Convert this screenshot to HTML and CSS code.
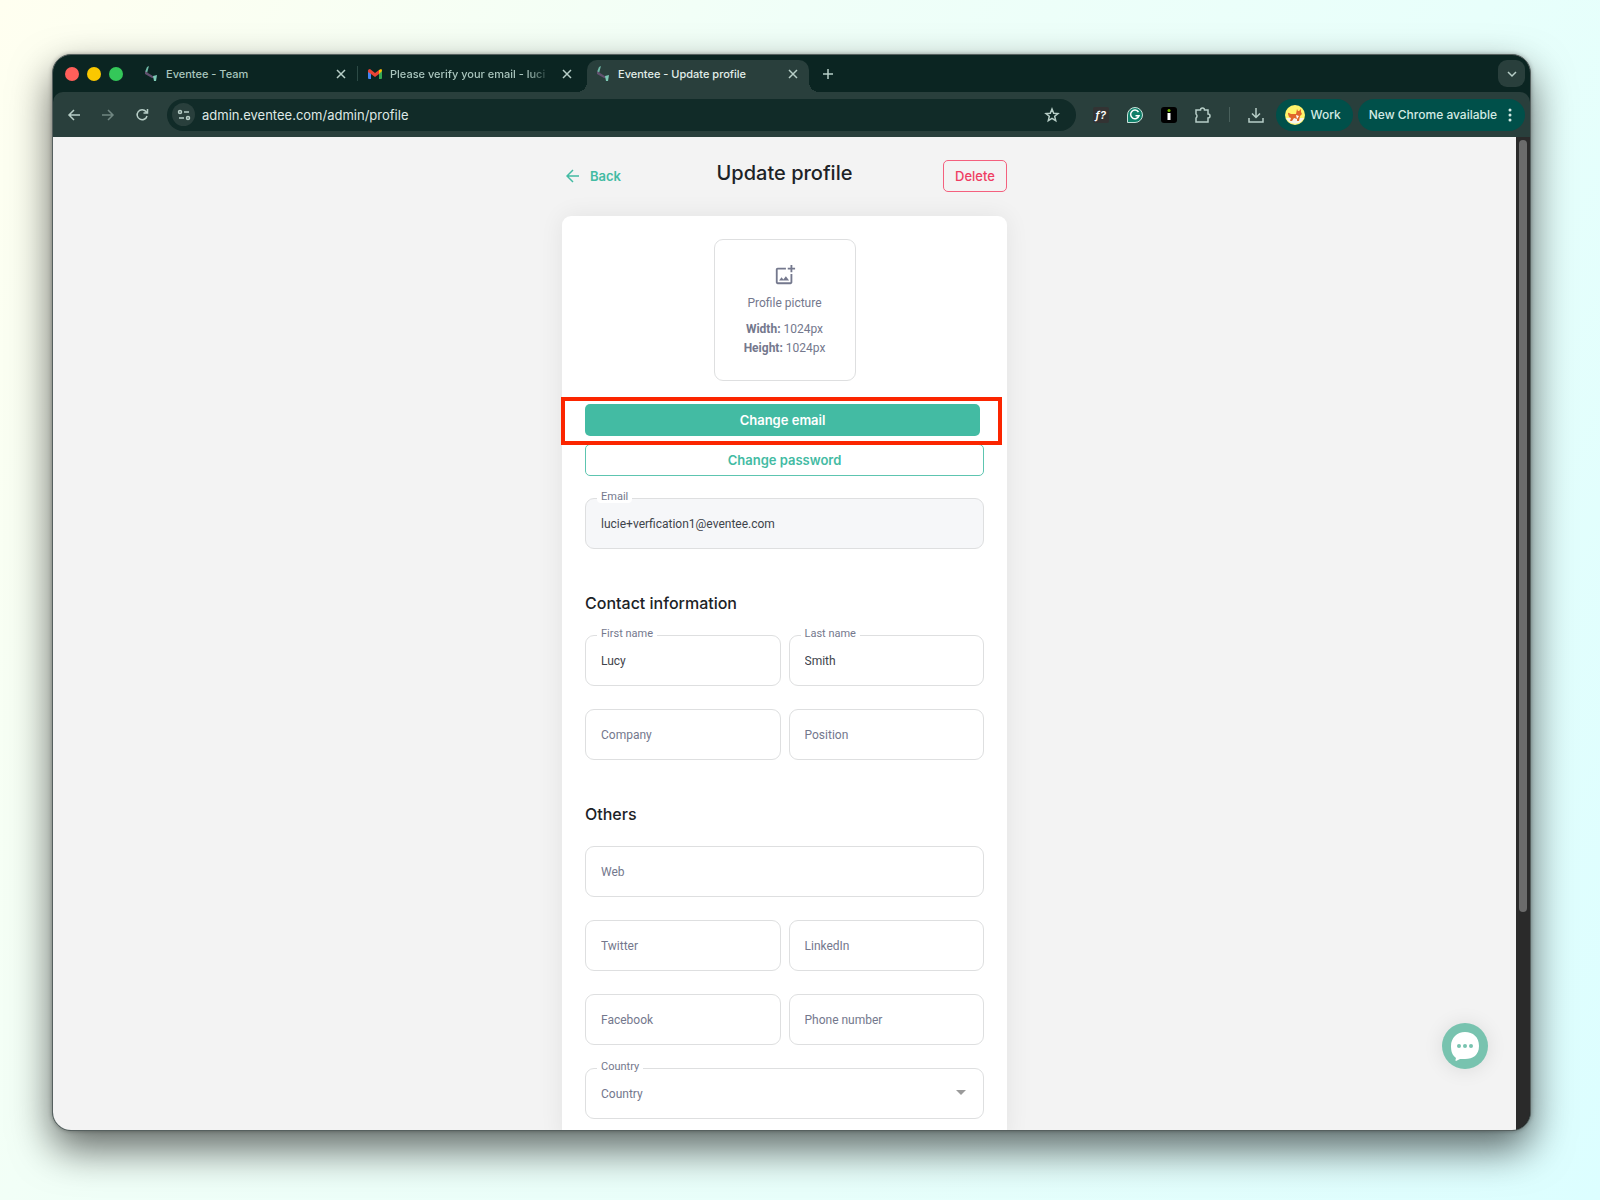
FILE: index.html
```html
<!DOCTYPE html>
<html lang="en">
<head>
  <meta charset="UTF-8" />
  <meta name="viewport" content="width=device-width, initial-scale=1.0" />
  <title>Eventee - Update profile</title>
  <link rel="stylesheet" href="styles.css">
</head>
<body>
  <div class="window">

    <!-- Tabs -->
    <div class="tabbar">
      <div class="lights">
        <span class="light red"></span>
        <span class="light yellow"></span>
        <span class="light green"></span>
      </div>
      <div class="tab">
        <svg class="favicon" viewBox="0 0 14 16"><path d="M3 1L5 0 3 7 1 6z" fill="#6fb9a6"/><path d="M1 5L4 7 12 12 8 12 1 8z" fill="#61506e"/><path d="M9 10L13 9 12 15 10 15z" fill="#7cc9b5"/></svg>
        <span class="tab-title">Eventee - Team</span>
        <button class="icon-button" aria-label="Close tab"><svg width="12" height="12" viewBox="0 0 12 12"><path d="M2 2l8 8M10 2l-8 8"/></svg></button>
      </div>
      <div class="tab mail">
        <svg class="favicon" viewBox="0 0 14 14"><path d="M0 3v8q0 1 1 1h2V6z" fill="#4285f4"/><path d="M11 6v6h2q1 0 1-1V3z" fill="#34a853"/><path d="M11 3l2-1q1 0 1 2l-3 3z" fill="#fbbc04"/><path d="M0 4q0-2 2-2l5 4 4-3v4L7 10 3 7 0 5z" fill="#ea4335"/></svg>
        <span class="tab-title fade">Please verify your email - luci</span>
        <button class="icon-button" aria-label="Close tab"><svg width="12" height="12" viewBox="0 0 12 12"><path d="M2 2l8 8M10 2l-8 8"/></svg></button>
      </div>
      <div class="tab active">
        <svg class="favicon" viewBox="0 0 14 16"><path d="M3 1L5 0 3 7 1 6z" fill="#6fb9a6"/><path d="M1 5L4 7 12 12 8 12 1 8z" fill="#61506e"/><path d="M9 10L13 9 12 15 10 15z" fill="#7cc9b5"/></svg>
        <span class="tab-title">Eventee - Update profile</span>
        <button class="icon-button" aria-label="Close tab"><svg width="12" height="12" viewBox="0 0 12 12"><path d="M2 2l8 8M10 2l-8 8"/></svg></button>
      </div>
      <button class="icon-button new-tab" aria-label="New tab"><svg width="12" height="12" viewBox="0 0 12 12"><path d="M6 1v10M1 6h10"/></svg></button>
      <button class="icon-button tab-search" aria-label="Search tabs"><svg width="12" height="12" viewBox="0 0 12 12"><path d="M2 4l4 4 4-4"/></svg></button>
    </div>

    <!-- Toolbar -->
    <div class="toolbar">
      <div class="nav">
        <button class="icon-button" aria-label="Back"><svg width="14" height="14" viewBox="0 0 14 14"><path d="M13 7H2M7 2L2 7l5 5"/></svg></button>
        <button class="icon-button dim" aria-label="Forward"><svg width="14" height="14" viewBox="0 0 14 14"><path d="M1 7h11M7 2l5 5-5 5"/></svg></button>
        <button class="icon-button" aria-label="Reload"><svg width="14" height="14" viewBox="0 0 14 14"><path d="M12 8a5 5 0 1 1-1-4.500L12.500 5M12.500 1v4h-4"/></svg></button>
      </div>
      <div class="address">
        <button class="icon-button site-info" aria-label="Site information"><svg width="14" height="14" viewBox="0 0 14 14"><circle cx="3" cy="4" r="1.500"/><path d="M7 4h5M2 10h5"/><circle cx="11" cy="10" r="1.500"/></svg></button>
        <input class="url" type="text" aria-label="Address" value="admin.eventee.com/admin/profile" />
        <button class="icon-button" aria-label="Bookmark"><svg width="16" height="16" viewBox="0 0 16 16"><path d="M8 2l1.700 4.200 4.300.3-3.300 2.800 1 4.300L8 11.300l-3.700 2.300 1-4.300L2 6.500l4.300-.3z"/></svg></button>
      </div>
      <div class="extensions">
        <button class="icon-button ext-font" aria-label="Font finder">ƒ?</button>
        <button class="icon-button" aria-label="Grammar"><svg width="16" height="16" viewBox="0 0 16 16"><path d="M8 .5a7.500 7.500 0 1 1 0 15H.5V8A7.500 7.500 0 0 1 8 .5z" fill="#11806a" stroke="#c9e0da" stroke-width="1"/><path d="M11.500 5A4.300 4.300 0 1 0 12 8.800H8.500" stroke="#fff"/></svg></button>
        <button class="icon-button ext-info" aria-label="Info"><svg width="16" height="16" viewBox="0 0 16 16"><path d="M8 6v7" stroke="#fff" stroke-width="3"/><circle cx="8" cy="3.500" r="1.500" fill="#76b900" stroke="none"/></svg></button>
        <button class="icon-button" aria-label="Extensions"><svg width="18" height="18" viewBox="0 0 18 18"><path d="M2 4h4.500a2 2 0 0 1 4 0H14v4a2 2 0 0 1 0 4v4H2v-4a2.500 2.500 0 0 0 0-4z"/></svg></button>
        <span class="divider"></span>
        <button class="icon-button" aria-label="Downloads"><svg width="16" height="16" viewBox="0 0 16 16"><path d="M8 1v9M4 6.500l4 4 4-4M1 11v4h14v-4"/></svg></button>
      </div>
      <button class="pill work">
        <svg class="avatar" viewBox="0 0 20 20"><circle cx="10" cy="10" r="10" fill="#fff36b"/><path d="M1 13h18a10 10 0 0 1-18 0z" fill="#f6f3ea"/><path d="M3 9q0-2 1-1l2 1h5l1-5 1 2h1l2-2v3l1 2-2 2-1 5h-2v-2l-3-1-2 3H5l1-3-2-1z" fill="#e0672b"/><path d="M11 10l3 1-2 3z" fill="#fff"/></svg>
        Work
      </button>
      <button class="pill update">
        New Chrome available
        <svg width="4" height="14" viewBox="0 0 4 14"><circle cx="2" cy="2" r="1.500"/><circle cx="2" cy="7" r="1.500"/><circle cx="2" cy="12" r="1.500"/></svg>
      </button>
    </div>

    <!-- Page -->
    <div class="viewport">
      <main class="page">
        <header class="page-header">
          <a class="back" href="#">
            <svg width="14" height="14" viewBox="0 0 14 14"><path d="M13 7H1M7 1L1 7l6 6"/></svg>
            Back
          </a>
          <h1>Update profile</h1>
          <button class="delete">Delete</button>
        </header>

        <form class="card">
          <button type="button" class="picture">
            <svg width="22" height="22" viewBox="0 0 24 24"><path d="M18 20H4V6h9V4H4c-1.100 0-2 .9-2 2v14c0 1.100.9 2 2 2h14c1.100 0 2-.9 2-2v-9h-2v9zm-7.790-3.170l-1.960-2.360L5.500 18h11l-3.540-4.710zM20 4V1h-2v3h-3v2h3v3h2V6h3V4z"/></svg>
            <span class="picture-title">Profile picture</span>
            <span class="picture-size"><b>Width:</b> 1024px</span>
            <span class="picture-size"><b>Height:</b> 1024px</span>
          </button>

          <div class="actions">
            <div class="highlighted">
              <button type="button" class="primary">Change email</button>
            </div>
            <button type="button" class="outline">Change password</button>
          </div>

          <div class="field">
            <label for="email">Email</label>
            <input id="email" class="locked" type="text" value="lucie+verfication1@eventee.com" readonly />
          </div>

          <h2>Contact information</h2>
          <div class="grid">
            <div class="field">
              <label for="firstName">First name</label>
              <input id="firstName" type="text" value="Lucy" />
            </div>
            <div class="field">
              <label for="lastName">Last name</label>
              <input id="lastName" type="text" value="Smith" />
            </div>
            <div class="field"><input type="text" aria-label="Company" placeholder="Company" /></div>
            <div class="field"><input type="text" aria-label="Position" placeholder="Position" /></div>
          </div>

          <h2>Others</h2>
          <div class="grid">
            <div class="field wide"><input type="text" aria-label="Web" placeholder="Web" /></div>
            <div class="field"><input type="text" aria-label="Twitter" placeholder="Twitter" /></div>
            <div class="field"><input type="text" aria-label="LinkedIn" placeholder="LinkedIn" /></div>
            <div class="field"><input type="text" aria-label="Facebook" placeholder="Facebook" /></div>
            <div class="field"><input type="text" aria-label="Phone number" placeholder="Phone number" /></div>
            <div class="field wide">
              <label for="country">Country</label>
              <select id="country"><option>Country</option></select>
              <span class="caret"></span>
            </div>
          </div>
        </form>

        <button class="chat" aria-label="Open chat">
          <svg width="30" height="30" viewBox="0 0 30 30"><path d="M15 1C23 1 29 6 29 15s-6 13-14 13c-2 0-4 0-5 0l-4 2q-1 0 0-3C2 24 1 20 1 15 1 7 7 1 15 1z" fill="#fff"/><circle cx="9" cy="15" r="2"/><circle cx="15" cy="15" r="2"/><circle cx="21" cy="15" r="2"/></svg>
        </button>
      </main>
      <div class="scrollbar"><div class="thumb"></div></div>
    </div>
  </div>
</body>
</html>
```
FILE: styles.css
```css
* {
  box-sizing: border-box;
}

body {
  margin: 0;
  height: 100vh;
  padding: 54px 69px 69px 52px;
  display: flex;
  font-family: Roboto, sans-serif;
  background: linear-gradient(120deg, #fffff0 0%, #f0fff8 35%, #e8fffb 65%, #dcfeff 100%);
}

button,
input,
select {
  font: inherit;
  margin: 0;
}

button {
  padding: 0;
  border: none;
  background: none;
  cursor: pointer;
}

svg {
  flex: none;
}

.window {
  flex: 1;
  min-width: 0;
  display: flex;
  flex-direction: column;
  border-radius: 19px;
  border: 1px solid #56605f;
  overflow: hidden;
  background: #0b2522;
  box-shadow: 0 18px 40px rgba(0, 0, 0, 0.6), 0 0 4px rgba(0, 0, 0, 0.3);
}

/* Tabs */
.tabbar {
  display: flex;
  align-items: center;
  height: 37px;
  padding: 0 5px 0 12px;
  color: #a9c5bd;
  font-family: Inter, sans-serif;
  font-size: 11px;
  font-weight: 500;
}

.lights {
  display: flex;
  gap: 8px;
  margin-right: 12px;
}

.light {
  width: 14px;
  height: 14px;
  border-radius: 50%;
}

.red { background: #ff5f5a; }
.yellow { background: #fac800; }
.green { background: #34c759; }

.tab {
  display: flex;
  align-items: center;
  gap: 8px;
  flex: 0 1 222px;
  min-width: 0;
  height: 32px;
  margin-top: 5px;
  padding: 0 8px 5px 9px;
}

.mail {
  flex-basis: 230px;
  position: relative;
  padding: 0 12px 5px 11px;
}

.mail::before {
  content: "";
  position: absolute;
  left: 0;
  top: 6px;
  width: 1px;
  height: 15px;
  background: #2c4a45;
}

.active {
  position: relative;
  background: #293f3c;
  border-radius: 10px 10px 0 0;
  color: #e2eeea;
}

/* Flared feet of the open tab */
.active::before,
.active::after {
  content: "";
  position: absolute;
  bottom: 0;
  width: 10px;
  height: 10px;
}

.active::before {
  left: -10px;
  background: radial-gradient(circle at 0 0, transparent 10px, #293f3c 10px);
}

.active::after {
  right: -10px;
  background: radial-gradient(circle at 100% 0, transparent 10px, #293f3c 10px);
}

.favicon {
  width: 14px;
  height: 16px;
}

.tab-title {
  flex: 1;
  min-width: 0;
  overflow: hidden;
  white-space: nowrap;
}

.fade {
  -webkit-mask-image: linear-gradient(to right, #000 85%, transparent);
  mask-image: linear-gradient(to right, #000 85%, transparent);
}

.icon-button {
  display: flex;
  align-items: center;
  justify-content: center;
  flex: none;
  width: 16px;
  height: 16px;
  color: #b7cec7;
}

.icon-button svg {
  fill: none;
  stroke: currentColor;
  stroke-width: 1.5;
}

.new-tab {
  margin-left: 11px;
}

.tab-search {
  width: 27px;
  height: 27px;
  margin-left: auto;
  border-radius: 9px;
  background: #293f3c;
}

/* Toolbar */
.toolbar {
  display: flex;
  align-items: center;
  height: 45px;
  padding: 0 5px 0 13px;
  background: #293f3c;
  border-radius: 10px 10px 0 0;
  font-family: Inter, sans-serif;
}

.nav {
  display: flex;
  gap: 18px;
  margin-right: 17px;
}

.dim {
  opacity: 0.5;
}

.address {
  flex: 1;
  min-width: 0;
  display: flex;
  align-items: center;
  height: 32px;
  padding: 0 16px 0 5px;
  border-radius: 16px;
  background: #112b28;
}

.site-info {
  width: 23px;
  height: 23px;
  border-radius: 50%;
  background: #293f3c;
}

.url {
  flex: 1;
  min-width: 0;
  padding: 0 7px;
  border: none;
  outline: none;
  background: none;
  color: #dfe8e5;
  font-size: 13px;
}

.extensions {
  display: flex;
  align-items: center;
  gap: 18px;
  margin: 0 12px 0 17px;
}

.ext-font {
  border-radius: 2px;
  background: #333;
  color: #fff;
  font-size: 11px;
  font-style: italic;
  font-weight: 600;
}

.ext-info {
  border-radius: 3px;
  background: #000;
}

.divider {
  width: 1px;
  height: 15px;
  background: #49605c;
}

.pill {
  display: flex;
  align-items: center;
  flex: none;
  height: 32px;
  border-radius: 16px;
  background: #00504a;
  color: #d3ebe4;
  font-size: 12px;
  font-weight: 500;
}

.work {
  gap: 6px;
  padding: 0 12px 0 9px;
  margin-right: 5px;
}

.avatar {
  width: 20px;
  height: 20px;
}

.update {
  gap: 11px;
  padding: 0 13px 0 11px;
}

.update svg {
  fill: currentColor;
}

/* Page */
.viewport {
  flex: 1;
  min-height: 0;
  display: flex;
}

.page {
  position: relative;
  flex: 1;
  min-width: 0;
  overflow: hidden;
  padding: 23px 20px 0;
  background: #f3f3f3;
}

.page-header {
  display: grid;
  grid-template-columns: 1fr auto 1fr;
  align-items: center;
  max-width: 445px;
  height: 32px;
  margin: 0 auto 24px;
  font-family: Inter, sans-serif;
}

.back {
  display: flex;
  align-items: center;
  gap: 10px;
  padding-left: 4px;
  color: #43bba3;
  font-size: 13px;
  font-weight: 600;
  text-decoration: none;
}

.back svg {
  fill: none;
  stroke: currentColor;
  stroke-width: 1.5;
}

h1 {
  margin: 0 0 6px;
  color: #1c2226;
  font-size: 20px;
  line-height: 26px;
  font-weight: 500;
}

.delete {
  justify-self: end;
  width: 64px;
  height: 32px;
  border: 1px solid #f4607e;
  border-radius: 5px;
  color: #ef3d62;
  font-size: 13px;
  font-weight: 500;
}

.card {
  display: flex;
  flex-direction: column;
  max-width: 445px;
  margin: 0 auto;
  padding: 23px;
  border-radius: 9px;
  background: #fff;
  box-shadow: 0 0 24px rgba(0, 0, 0, 0.07);
}

.picture {
  display: flex;
  flex-direction: column;
  align-items: center;
  align-self: center;
  width: 142px;
  height: 142px;
  padding-top: 24px;
  border: 1px solid #dedfe0;
  border-radius: 9px;
  color: #74788d;
  font-size: 12px;
  line-height: 19px;
}

.picture svg {
  fill: currentColor;
}

.picture-title {
  margin: 8px 0 7px;
}

.actions {
  display: flex;
  flex-direction: column;
  gap: 8px;
  margin: 23px 0 22px;
  font-family: Inter, sans-serif;
  font-size: 13px;
  font-weight: 600;
}

.highlighted {
  position: relative;
  display: flex;
  padding-right: 4px;
}

.highlighted::after {
  content: "";
  position: absolute;
  inset: -7px -18px -9px -24px;
  border: 4px solid #fb2500;
  pointer-events: none;
}

.primary {
  flex: 1;
  height: 32px;
  border-radius: 5px;
  background: #43bba3;
  color: #fff;
}

.outline {
  height: 32px;
  border: 1px solid #5dc5b0;
  border-radius: 5px;
  color: #43bba3;
}

.field {
  position: relative;
}

.field label {
  position: absolute;
  left: 12px;
  top: -8px;
  padding: 0 4px;
  border-radius: 4px;
  background: #fff;
  color: #74788d;
  font-size: 11px;
  line-height: 13px;
}

.field input,
.field select {
  display: block;
  width: 100%;
  height: 51px;
  padding: 0 15px;
  border: 1px solid #dedfe0;
  border-radius: 9px;
  outline: none;
  background: #fff;
  color: #3e444b;
  font-size: 12px;
}

.field input::placeholder {
  color: #74788d;
  opacity: 1;
}

.field .locked {
  background: #f6f7f9;
}

.field select {
  appearance: none;
  color: #74788d;
}

.caret {
  position: absolute;
  right: 18px;
  top: 22px;
  border: 5px solid transparent;
  border-top-color: #9b9b9b;
  pointer-events: none;
}

h2 {
  margin: 42px 0 20px;
  color: #1c2226;
  font-family: Inter, sans-serif;
  font-size: 16px;
  line-height: 24px;
  font-weight: 500;
}

.grid {
  display: grid;
  grid-template-columns: 1fr 1fr;
  gap: 23px 8px;
}

.wide {
  grid-column: 1 / -1;
}

.chat {
  position: absolute;
  right: 28px;
  bottom: 61px;
  display: flex;
  align-items: center;
  justify-content: center;
  width: 46px;
  height: 46px;
  border-radius: 50%;
  background: #78c3af;
  box-shadow: 0 1px 20px rgba(0, 0, 0, 0.1);
}

.chat svg {
  fill: #78c3af;
}

.scrollbar {
  width: 14px;
  padding: 3px 3px 0 3px;
  background: #2a2a2a;
}

.thumb {
  height: 78%;
  border-radius: 4px;
  background: #6b6b6b;
}
```
